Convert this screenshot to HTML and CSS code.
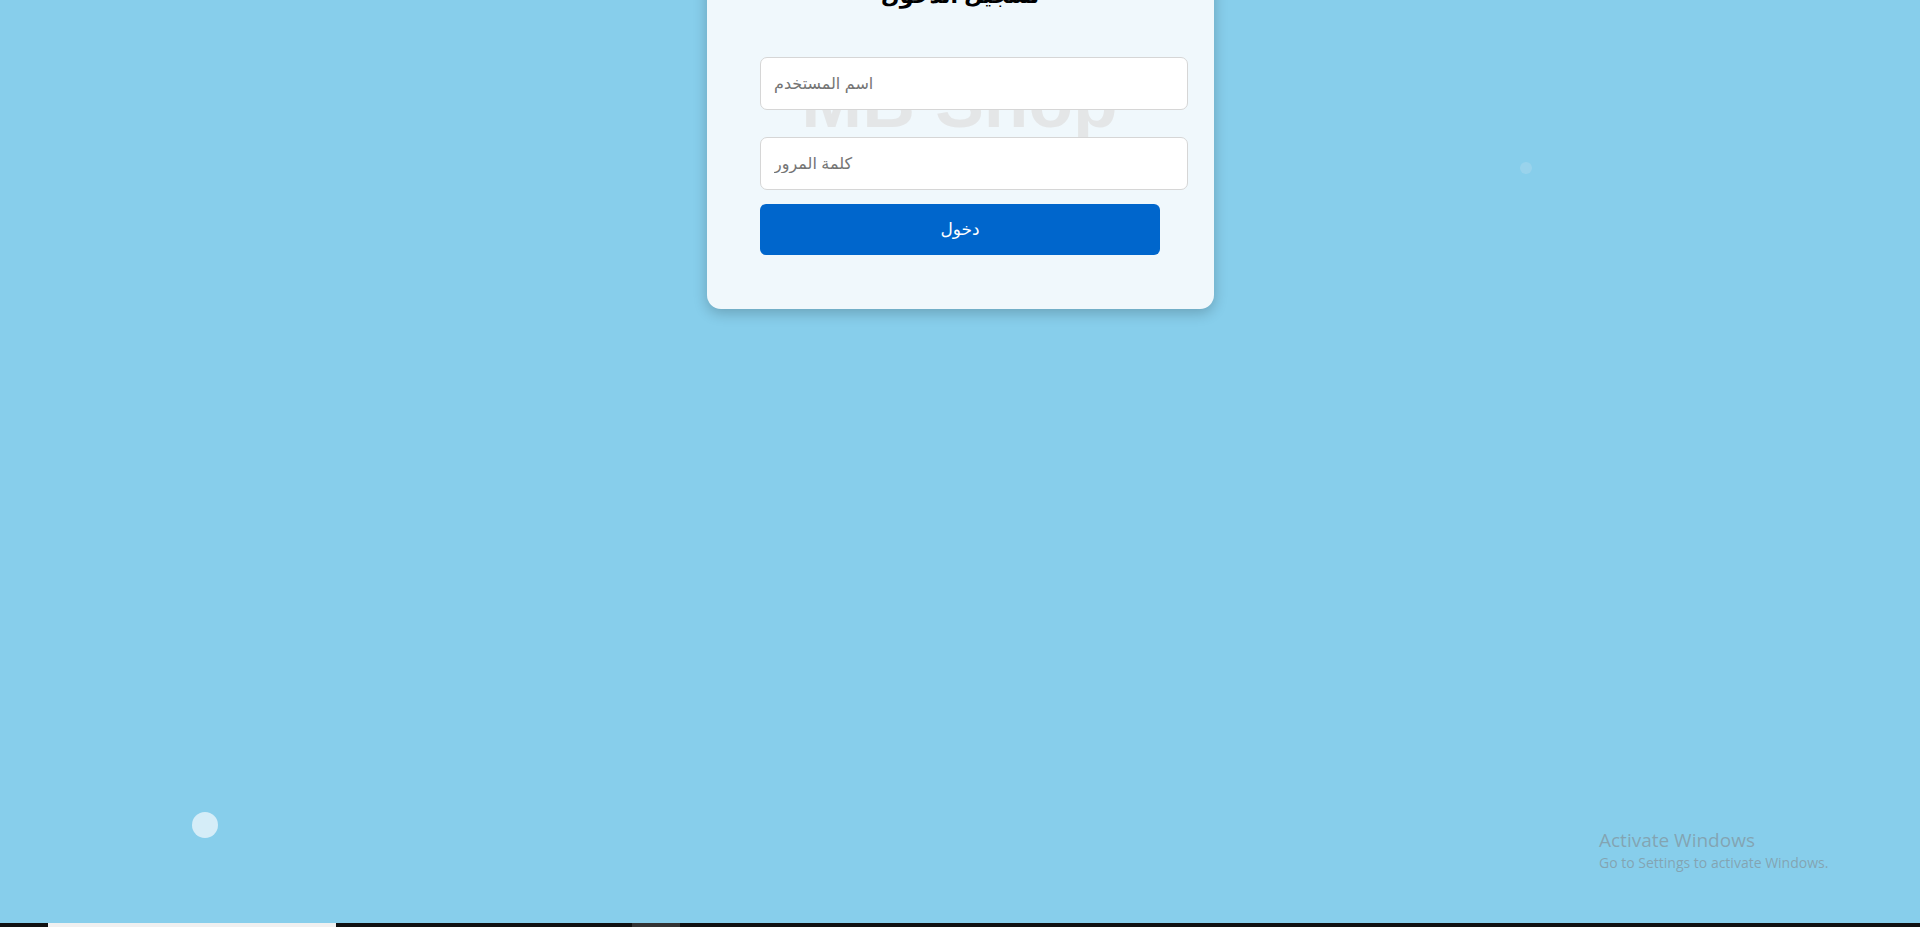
FILE: index.html
```html
<!DOCTYPE html>
<html lang="ar">
<head>
<meta charset="utf-8">
<title>تسجيل الدخول</title>
<link rel="stylesheet" href="styles.css">
</head>
<body>
<main class="page">
  <div class="card">
    <div class="watermark">MB Shop</div>
    <h2 class="title">تسجيل الدخول</h2>
    <form class="form">
      <input class="field" type="text" placeholder="اسم المستخدم">
      <input class="field field-pass" type="password" placeholder="كلمة المرور">
      <button class="btn" type="button">دخول</button>
    </form>
  </div>
</main>
<span class="bubble bubble-big"></span>
<span class="bubble bubble-small"></span>
<div class="activate">
  <div class="act-title">Activate Windows</div>
  <div class="act-sub">Go to Settings to activate Windows.</div>
</div>
<div class="taskbar">
  <span class="tb-gap1"></span>
  <span class="tb-light"></span>
  <span class="tb-gap2"></span>
  <span class="tb-grey"></span>
</div>
</body>
</html>
```

FILE: styles.css
```css
html, body {
  margin: 0;
  padding: 0;
  height: 100%;
  overflow: hidden;
}
body {
  background: #87ceeb;
  font-family: "Liberation Sans", Arial, "DejaVu Sans", sans-serif;
  position: relative;
}
.page {
  display: flex;
  justify-content: center;
  padding-left: 1px;
}
.card {
  position: relative;
  width: 400px;
  margin-top: -62px;
  padding: 40px 54px 54px 53px;
  background: #f0f8fc;
  border-radius: 14px;
  box-shadow: 0 4px 14px rgba(0, 0, 0, 0.22);
}
.watermark {
  position: absolute;
  left: 0;
  right: 0;
  top: 127px;
  text-align: center;
  font-size: 73px;
  line-height: 73px;
  font-weight: bold;
  color: #e4e6e7;
  padding-right: 2px;
}
.title {
  position: relative;
  margin: -2px 0 41px;
  font-size: 22px;
  line-height: 40px;
  font-weight: bold;
  color: #000;
  text-align: center;
}
.form {
  position: relative;
  display: flex;
  flex-direction: column;
}
.field {
  width: 100%;
  box-sizing: content-box;
  padding: 16px 13px;
  line-height: 19px;
  height: 19px;
  border: 1px solid #d6d6d6;
  border-radius: 7px;
  background: #fff;
  font-family: inherit;
  font-size: 16px;
  color: #333;
  outline: none;
}
.field::placeholder {
  color: #757575;
}
.field-pass {
  margin-top: 27px;
}
.btn {
  margin-top: 14px;
  width: 100%;
  height: 51px;
  border: none;
  border-radius: 6px;
  background: #0066cc;
  color: #fff;
  font-family: inherit;
  font-size: 17px;
  cursor: pointer;
}
.bubble {
  position: absolute;
  border-radius: 50%;
}
.bubble-big {
  left: 192px;
  top: 812px;
  width: 26px;
  height: 26px;
  background: #d5edf8;
}
.bubble-small {
  left: 1520px;
  top: 162px;
  width: 12px;
  height: 12px;
  background: #99d3ec;
}
.activate {
  position: absolute;
  left: 1599px;
  top: 828px;
  font-family: "Open Sans", "Liberation Sans", sans-serif;
  color: rgba(130, 150, 160, 0.75);
}
.act-title {
  font-size: 19px;
  line-height: 24px;
}
.act-sub {
  font-size: 14px;
  line-height: 20px;
  margin-top: 1px;
}
.taskbar {
  position: absolute;
  left: 0;
  right: 0;
  bottom: 0;
  height: 4px;
  background: #111;
  display: flex;
}
.tb-gap1 { width: 48px; }
.tb-light { width: 288px; background: #f0f0f0; }
.tb-gap2 { width: 296px; }
.tb-grey { width: 48px; background: #333; }
```
